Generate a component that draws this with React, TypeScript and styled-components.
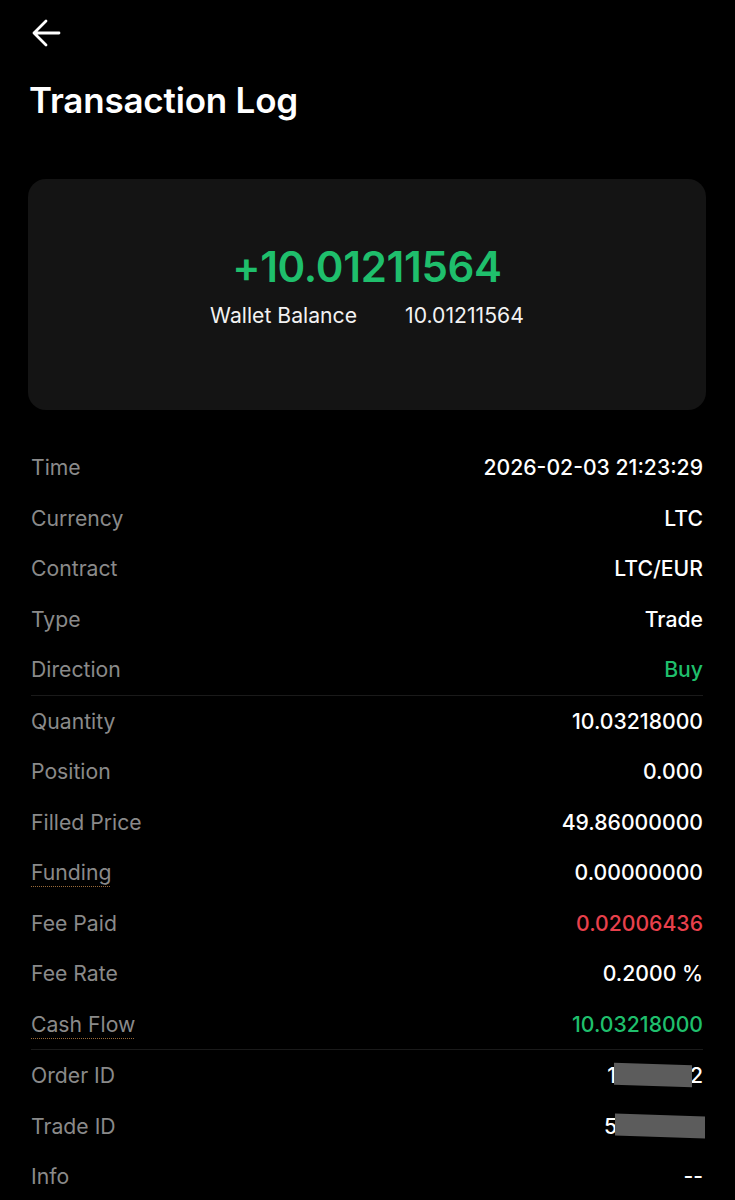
import { ReactNode } from "react";
import styled, { createGlobalStyle } from "styled-components";

type Tone = "default" | "green" | "red";

interface Item {
  label: string;
  value: ReactNode;
  tone?: Tone;
  dotted?: boolean;
}

const App = () => {
  const groups: Item[][] = [
    [
      { label: "Time", value: "2026-02-03 21:23:29" },
      { label: "Currency", value: "LTC" },
      { label: "Contract", value: "LTC/EUR" },
      { label: "Type", value: "Trade" },
      { label: "Direction", value: "Buy", tone: "green" },
    ],
    [
      { label: "Quantity", value: "10.03218000" },
      { label: "Position", value: "0.000" },
      { label: "Filled Price", value: "49.86000000" },
      { label: "Funding", value: "0.00000000", dotted: true },
      { label: "Fee Paid", value: "0.02006436", tone: "red" },
      { label: "Fee Rate", value: "0.2000 %" },
      { label: "Cash Flow", value: "10.03218000", tone: "green", dotted: true },
    ],
    [
      {
        label: "Order ID",
        value: (
          <>
            1<Redacted $w={78} />2
          </>
        ),
      },
      {
        label: "Trade ID",
        value: (
          <>
            5<Redacted $w={90} />
          </>
        ),
      },
      { label: "Info", value: "--" },
    ],
  ];

  return (
    <Page>
      <GlobalStyle />
      <BackButton aria-label="Back">
        <svg width="30" height="30" viewBox="0 0 30 30" fill="none">
          <path
            d="M28 15H3M15 3L3 15L15 27"
            stroke="#fff"
            strokeWidth="2.8"
            strokeLinecap="round"
            strokeLinejoin="round"
          />
        </svg>
      </BackButton>
      <Title>Transaction Log</Title>

      <BalanceCard>
        <Amount>+10.01211564</Amount>
        <BalanceLine>
          <span>Wallet Balance</span>
          <span>10.01211564</span>
        </BalanceLine>
      </BalanceCard>

      <List>
        {groups.map((group, gi) => (
          <Group key={gi} $last={gi === groups.length - 1}>
            {group.map((item) => (
              <Row key={item.label}>
                <Label $dotted={item.dotted}>{item.label}</Label>
                <Value $tone={item.tone ?? "default"}>{item.value}</Value>
              </Row>
            ))}
          </Group>
        ))}
      </List>
    </Page>
  );
};

export default App;

const GlobalStyle = createGlobalStyle`
  html, body {
    margin: 0;
    padding: 0;
    background: #000000;
  }
  body {
    font-family: Inter, "Noto Sans", "Liberation Sans", sans-serif;
    color: #ffffff;
  }
`;

const Page = styled.div`
  width: 735px;
  min-height: 1200px;
  box-sizing: border-box;
  padding: 18px 29px 0 28px;
  background: #000;
`;

const BackButton = styled.div`
  display: flex;
  width: 30px;
  height: 30px;
  margin-left: 3px;
  cursor: pointer;
`;

const Title = styled.h1`
  margin: 31px 0 0 1px;
  font-size: 35px;
  font-weight: 600;
  letter-spacing: -0.2px;
  line-height: 42px;
  color: #fff;
`;

const BalanceCard = styled.div`
  margin-top: 58px;
  height: 231px;
  border-radius: 18px;
  background: #141414;
  display: flex;
  flex-direction: column;
  align-items: center;
  justify-content: center;
  gap: 10px;
  padding-bottom: 20px;
  box-sizing: border-box;
`;

const Amount = styled.div`
  font-size: 42px;
  font-weight: 600;
  line-height: 50px;
  color: #1fbf6c;
  letter-spacing: -0.3px;
`;

const BalanceLine = styled.div`
  display: flex;
  gap: 48px;
  font-size: 21.2px;
  line-height: 26px;
  color: #f2f2f2;
`;

const List = styled.div`
  margin-top: 32px;
  padding: 0 3px;
`;

const Group = styled.div<{ $last: boolean }>`
  border-bottom: ${(p) => (p.$last ? "none" : "1px solid #1a1a1a")};
`;

const Row = styled.div`
  height: 50.5px;
  display: flex;
  align-items: center;
  justify-content: space-between;
  font-size: 21.2px;
`;

const Label = styled.span<{ $dotted?: boolean }>`
  color: #8a8a8a;
  font-weight: 400;
  ${(p) =>
    p.$dotted &&
    `
    text-decoration: underline dotted #9a6a3a;
    text-decoration-thickness: 1px;
    text-underline-offset: 6px;
  `}
`;

const toneColor: Record<Tone, string> = {
  default: "#ffffff",
  green: "#1fbf6c",
  red: "#e8404c",
};

const Value = styled.span<{ $tone: Tone }>`
  display: flex;
  align-items: center;
  font-weight: 500;
  color: ${(p) => toneColor[p.$tone]};
`;

const Redacted = styled.span<{ $w: number }>`
  display: inline-block;
  width: ${(p) => p.$w}px;
  height: 22px;
  background: #5c5c5c;
  margin: 0 -2px;
  transform: skewY(2deg);
`;
